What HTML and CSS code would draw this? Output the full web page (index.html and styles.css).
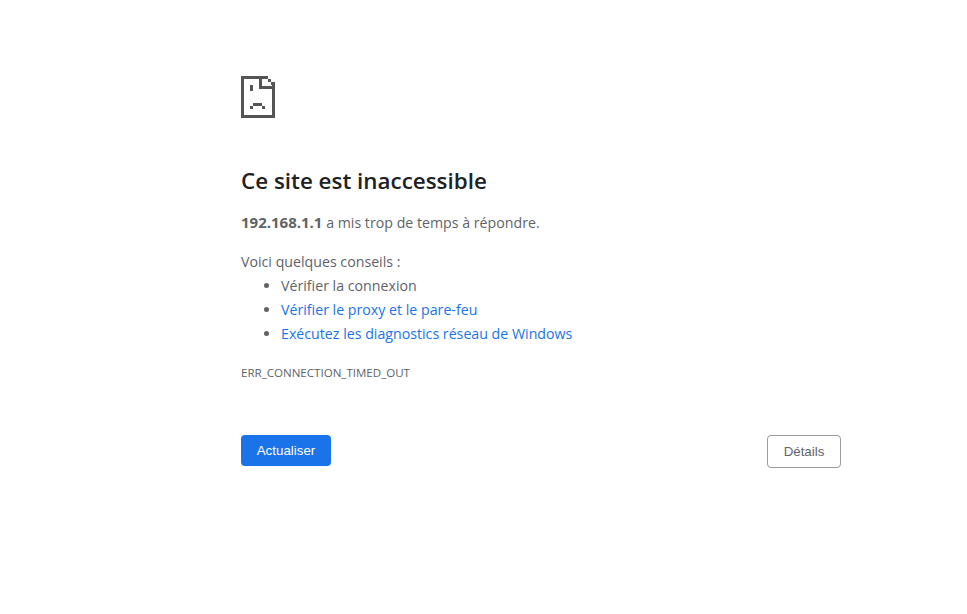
FILE: index.html
```html
<!DOCTYPE html>
<html lang="fr">
  <head>
    <meta charset="UTF-8" />
    <title>Ce site est inaccessible</title>
    <link rel="stylesheet" href="styles.css">
  </head>

  <body>
    <div class="wrapper">
      <!-- sad page icon, drawn on the pixel grid -->
      <svg class="icon" width="34" height="42" viewBox="0 0 34 42" shape-rendering="crispEdges" aria-hidden="true">
        <g fill="#555">
          <rect x="0" y="0" width="21" height="3" />
          <rect x="0" y="0" width="3" height="42" />
          <rect x="0" y="39" width="34" height="3" />
          <rect x="31" y="9" width="3" height="33" />
          <rect x="18" y="0" width="3" height="13" />
          <rect x="18" y="10" width="16" height="3" />
          <rect x="21" y="0" width="6" height="3" />
          <rect x="27" y="3" width="3" height="3" />
          <rect x="30" y="6" width="4" height="3" />
          <rect x="9" y="9" width="3" height="6" />
          <rect x="12" y="27" width="9" height="3" />
          <rect x="9" y="30" width="3" height="3" />
          <rect x="21" y="30" width="3" height="3" />
        </g>
      </svg>

      <h1>Ce site est inaccessible</h1>
      <p class="summary"><strong>192.168.1.1</strong> a mis trop de temps à répondre.</p>

      <p class="tips__title">Voici quelques conseils :</p>
      <ul class="tips">
        <li>Vérifier la connexion</li>
        <li><a href="#">Vérifier le proxy et le pare-feu</a></li>
        <li><a href="#">Exécutez les diagnostics réseau de Windows</a></li>
      </ul>

      <div class="error-code">ERR_CONNECTION_TIMED_OUT</div>

      <div class="buttons">
        <button class="btn btn-primary">Actualiser</button>
        <button class="btn btn-secondary">Détails</button>
      </div>
    </div>
  </body>
</html>
```

FILE: styles.css
```css
html {
  box-sizing: border-box;
}

*,
*:before,
*:after {
  box-sizing: inherit;
}

body,
h1,
p,
ul {
  margin: 0;
  padding: 0;
  font-weight: normal;
}

body {
  background: #fff;
  color: #5f6368;
  font-family: "Open Sans", "Noto Sans", sans-serif;
  font-size: 14.2px;
}

.wrapper {
  width: 600px;
  margin-left: 241px;
  padding-top: 76px;
}

.icon {
  display: block;
}

h1 {
  margin-top: 46px;
  color: #202124;
  font-size: 22.4px;
  font-weight: 600;
  line-height: 34px;
}

.summary {
  margin-top: 12px;
  line-height: 24px;
}

.summary strong {
  font-size: 15px;
  font-weight: 700;
}

.tips__title {
  margin-top: 15px;
  line-height: 24px;
}

.tips {
  margin-left: 40px;
}

.tips li {
  line-height: 24px;
}

.tips a {
  color: #1a73e8;
  text-decoration: none;
}

.error-code {
  margin-top: 19px;
  font-size: 11.55px;
  line-height: 16px;
}

.buttons {
  display: flex;
  justify-content: space-between;
  align-items: flex-start;
  margin-top: 54px;
}

.btn {
  border-radius: 4px;
  font-family: "Liberation Sans", Arial, sans-serif;
  font-size: 13.33px;
  cursor: pointer;
}

.btn-primary {
  width: 90px;
  height: 31px;
  border: 0;
  background: #1a73e8;
  color: #fff;
}

.btn-secondary {
  width: 74px;
  height: 33px;
  border: 1px solid #9a9a9f;
  background: #fff;
  color: #5f6368;
}
```
